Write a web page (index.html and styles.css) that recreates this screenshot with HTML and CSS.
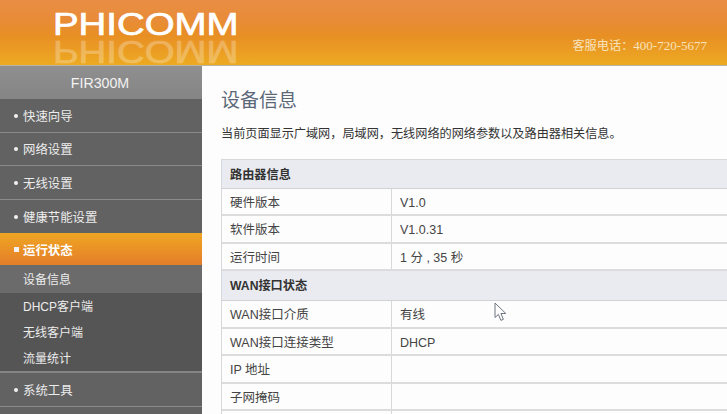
FILE: index.html
```html
<!DOCTYPE html>
<html lang="zh-CN">
<head>
<meta charset="utf-8">
<title>设备信息</title>
<link rel="stylesheet" href="styles.css">
</head>
<body>
<header class="top">
  <div class="logo">
    <div class="logo-text">PHICOMM</div>
    <div class="logo-mirror" aria-hidden="true">PHICOMM</div>
  </div>
  <div class="hotline">客服电话：<span class="digits">400-720-5677</span></div>
</header>
<div class="main">
  <nav class="side">
    <div class="model">FIR300M</div>
    <a class="item"><i class="dot"></i>快速向导</a>
    <a class="item"><i class="dot"></i>网络设置</a>
    <a class="item"><i class="dot"></i>无线设置</a>
    <a class="item last"><i class="dot"></i>健康节能设置</a>
    <a class="item active"><i class="dot"></i>运行状态</a>
    <div class="sub">
      <a class="sub-item current">设备信息</a>
      <a class="sub-item">DHCP客户端</a>
      <a class="sub-item">无线客户端</a>
      <a class="sub-item">流量统计</a>
    </div>
    <a class="item"><i class="dot"></i>系统工具</a>
  </nav>
  <main class="content">
    <h1 class="title">设备信息</h1>
    <p class="intro">当前页面显示广域网，局域网，无线网络的网络参数以及路由器相关信息。</p>
    <div class="table">
      <div class="head">路由器信息</div>
      <div class="row"><div class="key">硬件版本</div><div class="val">V1.0</div></div>
      <div class="row"><div class="key">软件版本</div><div class="val">V1.0.31</div></div>
      <div class="row"><div class="key">运行时间</div><div class="val">1 分 , 35 秒</div></div>
      <div class="head">WAN接口状态</div>
      <div class="row"><div class="key">WAN接口介质</div><div class="val">有线</div></div>
      <div class="row"><div class="key">WAN接口连接类型</div><div class="val">DHCP</div></div>
      <div class="row"><div class="key">IP 地址</div><div class="val"></div></div>
      <div class="row"><div class="key">子网掩码</div><div class="val"></div></div>
      <div class="row"><div class="key"></div><div class="val"></div></div>
    </div>
  </main>
</div>
<svg class="cursor" width="14" height="20" viewBox="0 0 14 20" aria-hidden="true">
  <path d="M1 1 V15.5 L4.4 12.4 L6.9 18.4 L9.4 17.3 L6.9 11.5 L11.8 11.5 Z" fill="#fdfdfd" stroke="#6f7680" stroke-width="1"/>
</svg>
</body>
</html>
```
FILE: styles.css
```css
* { box-sizing: border-box; }
html, body { margin: 0; height: 414px; overflow: hidden; }
body {
  position: relative;
  width: 727px;
  background: #fdfdfd;
  font-family: "Liberation Sans", "Noto Sans CJK SC", sans-serif;
  font-size: 13px;
  color: #444;
}
.top {
  height: 66px;
  padding: 0 20px 0 53px;
  display: flex;
  justify-content: space-between;
  background: linear-gradient(#e98d45 0%, #e88c38 30%, #e88f24 55%, #edaa22 100%);
  border-bottom: 1px solid #b9b4a8;
}
.logo { width: 184px; height: 65px; }
.logo-text, .logo-mirror {
  font-family: "Liberation Sans", sans-serif;
  font-size: 32px;
  line-height: 25px;
  height: 25px;
  width: 153px;
  color: #fff;
  -webkit-text-stroke: .7px #fff;
  white-space: nowrap;
}
.logo-text { margin-top: 12px; transform-origin: 0 50%; transform: scaleX(1.2); }
.logo-mirror {
  margin-top: 2px;
  opacity: .26;
  transform-origin: 0 50%;
  transform: scale(1.2, -1);
}
.hotline {
  margin-top: 38px;
  font-family: "Liberation Serif", "Noto Sans CJK SC", serif;
  font-size: 12.2px;
  line-height: 16px;
  color: #f8e3bd;
  white-space: nowrap;
}
.digits { font-size: 13px; }
.main { display: flex; height: 348px; }
.side {
  width: 202px;
  flex: none;
  background: #626262;
  color: #ececec;
}
.model {
  height: 33px;
  line-height: 34px;
  padding-right: 2px;
  text-align: center;
  font-size: 14.2px;
  color: #f2f2f2;
  background: linear-gradient(#8f8f8f, #858585);
}
.item {
  display: flex;
  align-items: center;
  height: 33.5px;
  padding: 1px 0 0 14px;
  font-size: 12.4px;
  border-bottom: 1px solid #8a8a8a;
}
.item.last { border-bottom: 0; }
.dot {
  width: 4px;
  height: 4px;
  margin-right: 5px;
  background: #f2f2f2;
  border-radius: 2px;
}
.active {
  height: 32px;
  font-weight: bold;
  color: #fff;
  border: 0;
  background: linear-gradient(#efa622, #e47d2a);
}
.active .dot { width: 5px; height: 5px; border-radius: 0; margin-right: 4px; }
.sub {
  background: #555;
  border-bottom: 2px solid #858585;
}
.sub-item {
  display: block;
  height: 26.2px;
  line-height: 28px;
  padding-left: 23px;
  font-size: 12px;
}
.current { height: 27.5px; line-height: 31px; background: #6b6b6b; }
.content { flex: 1; min-width: 0; padding: 0 0 0 19px; }
.title {
  margin: 23px 0 0;
  font-size: 19px;
  font-weight: normal;
  line-height: 24px;
  color: #5b6878;
}
.intro {
  margin: 12px 0 0;
  font-size: 12.15px;
  line-height: 18px;
  color: #333;
  white-space: nowrap;
}
.table {
  width: 506px;
  margin-top: 16px;
  border-top: 1px solid #d6d8dc;
  border-left: 1px solid #d6d8dc;
}
.head {
  height: 28.5px;
  line-height: 30px;
  padding-left: 8px;
  font-size: 12.2px;
  font-weight: bold;
  color: #333;
  background: #e9ebf0;
  border-bottom: 1px solid #d0d2d6;
}
.row + .head { height: 30px; line-height: 31px; }
.row {
  display: flex;
  height: 27.5px;
  line-height: 28px;
  border-bottom: 2px solid #dcdcdc;
  background: #fdfdfd;
}
.key {
  width: 170px;
  padding-left: 8px;
  border-right: 1px solid #d6d8dc;
  font-size: 12.5px;
  color: #444;
}
.val { padding-left: 8px; font-size: 12.5px; color: #444; }
.cursor { position: absolute; left: 494px; top: 302px; }
```
